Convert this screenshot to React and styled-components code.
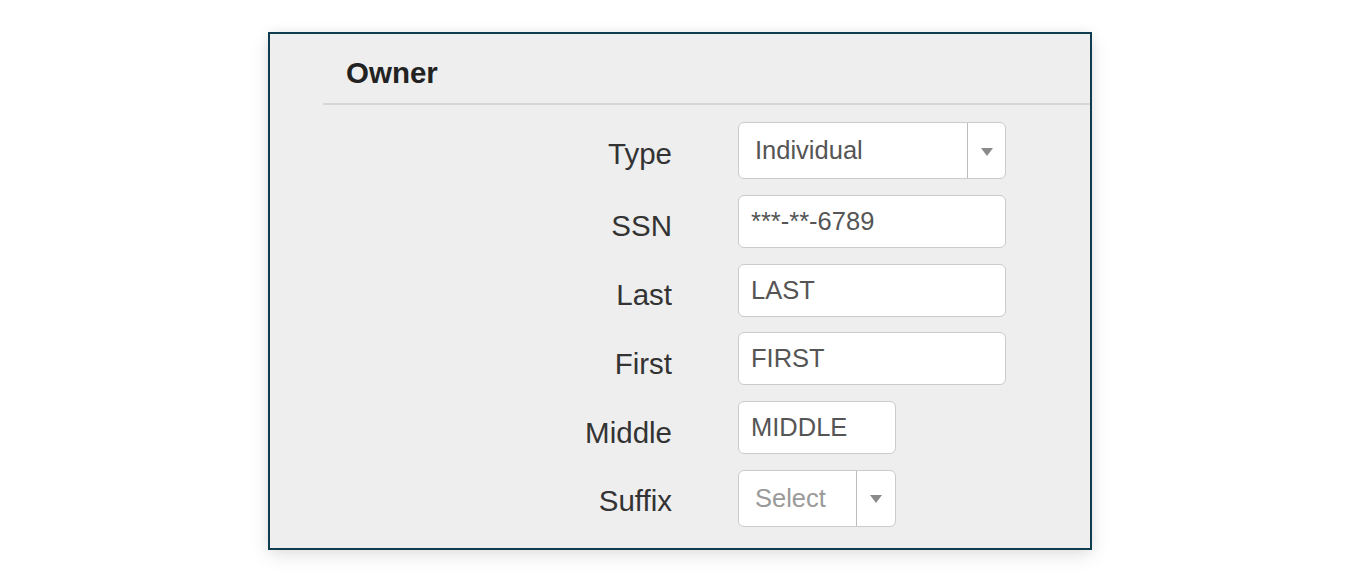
import React from "react";
import styled, { createGlobalStyle } from "styled-components";

const Global = createGlobalStyle`
  html, body { margin: 0; padding: 0; background: #ffffff; }
  body { font-family: "Liberation Sans", Arial, sans-serif; }
`;

const Page = styled.div`
  display: flex;
  justify-content: center;
  padding-top: 32px;
  height: 579px;
  box-sizing: border-box;
`;

const Frame = styled.section`
  width: 824px;
  height: 518px;
  box-sizing: border-box;
  border: 2px solid #0d3d4f;
  background: #eeeeee;
  box-shadow: 0 6px 18px rgba(0, 0, 0, 0.10), 0 0 10px rgba(0, 0, 0, 0.05);
`;

const Header = styled.div`
  margin-left: 53px;
  padding: 22px 0 14px 23px;
  border-bottom: 2px solid #d6d6d6;
`;

const Title = styled.h2`
  margin: 0;
  font-size: 29.5px;
  line-height: 33px;
  font-weight: bold;
  color: #222;
`;

const Form = styled.div`
  display: grid;
  grid-template-columns: 402px 1fr;
  column-gap: 66px;
  row-gap: 15.75px;
  padding-top: 17px;
`;

const Label = styled.div`
  text-align: right;
  font-size: 29.5px;
  line-height: 33px;
  padding-top: 14.5px;
  color: #333;
`;

const Field = styled.div`
  box-sizing: border-box;
  width: ${(p) => p.$w}px;
  height: ${(p) => p.$h || 53}px;
  background: #fff;
  border: 1.5px solid #cbcbcb;
  border-radius: 6px;
  display: flex;
  align-items: center;
  padding-left: 12px;
  font-size: 25.5px;
  color: #555;
`;

const SelectBox = styled.div`
  box-sizing: border-box;
  width: ${(p) => p.$w}px;
  height: ${(p) => p.$h}px;
  background: #fff;
  border: 1.5px solid #cbcbcb;
  border-radius: 6px;
  display: flex;
  align-items: stretch;
  font-size: 25.5px;
`;

const SelectValue = styled.div`
  flex: 1;
  display: flex;
  align-items: center;
  padding-left: 16px;
  color: ${(p) => (p.$placeholder ? "#9a9a9a" : "#555")};
`;

const Arrow = styled.div`
  width: ${(p) => p.$aw}px;
  border-left: 1.5px solid #bdbdbd;
  display: flex;
  align-items: center;
  justify-content: center;
  &::after {
    content: "";
    width: 0;
    height: 0;
    border-left: 6px solid transparent;
    border-right: 6px solid transparent;
    border-top: 8px solid #8a8a8a;
    margin-top: 2px;
  }
`;

export default function App() {
  return (
    <>
      <Global />
      <Page>
        <Frame>
          <Header>
            <Title>Owner</Title>
          </Header>
          <Form>
            <Label>Type</Label>
            <SelectBox $w={268} $h={57}>
              <SelectValue>Individual</SelectValue>
              <Arrow $aw={37} />
            </SelectBox>

            <Label>SSN</Label>
            <Field $w={268}>***-**-6789</Field>

            <Label>Last</Label>
            <Field $w={268}>LAST</Field>

            <Label>First</Label>
            <Field $w={268}>FIRST</Field>

            <Label>Middle</Label>
            <Field $w={158}>MIDDLE</Field>

            <Label>Suffix</Label>
            <SelectBox $w={158} $h={57}>
              <SelectValue $placeholder>Select</SelectValue>
              <Arrow $aw={38} />
            </SelectBox>
          </Form>
        </Frame>
      </Page>
    </>
  );
}
